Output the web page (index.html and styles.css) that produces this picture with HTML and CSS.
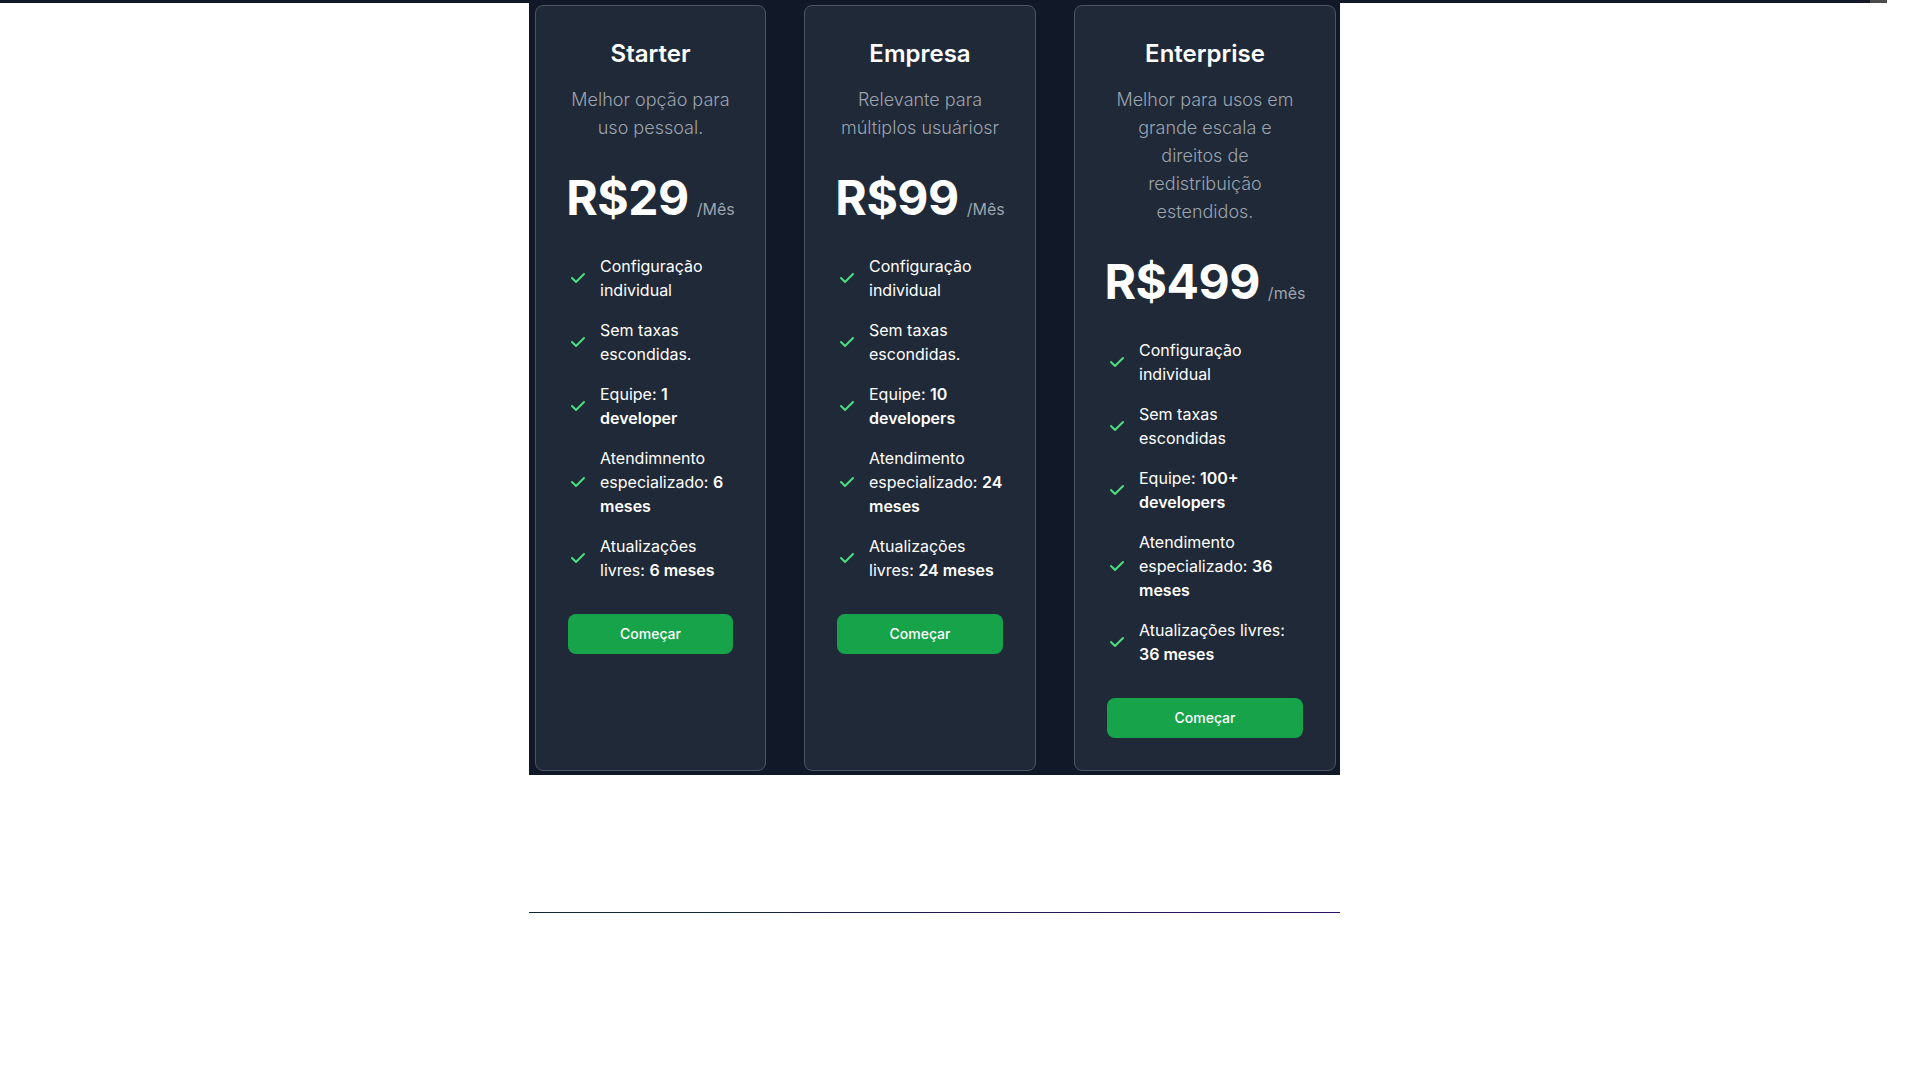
FILE: index.html
```html
<!DOCTYPE html>
<html lang="pt-BR">
<head>
<meta charset="utf-8">
<title>Preços</title>
<link rel="stylesheet" href="styles.css">
</head>
<body>
<div class="topbar"><span class="thumb"></span></div>
<section class="pricing">
  <div class="grid">
    <div class="card">
      <h3 class="title">Starter</h3>
      <p class="desc">Melhor opção para uso pessoal.</p>
      <div class="price"><span class="amount">R$29</span><span class="unit">/Mês</span></div>
      <ul class="features">
        <li><svg class="check" viewBox="0 0 20 20"><path fill-rule="evenodd" d="M16.707 5.293a1 1 0 010 1.414l-8 8a1 1 0 01-1.414 0l-4-4a1 1 0 011.414-1.414L8 12.586l7.293-7.293a1 1 0 011.414 0z"/></svg><span>Configuração individual</span></li>
        <li><svg class="check" viewBox="0 0 20 20"><path fill-rule="evenodd" d="M16.707 5.293a1 1 0 010 1.414l-8 8a1 1 0 01-1.414 0l-4-4a1 1 0 011.414-1.414L8 12.586l7.293-7.293a1 1 0 011.414 0z"/></svg><span>Sem taxas escondidas.</span></li>
        <li><svg class="check" viewBox="0 0 20 20"><path fill-rule="evenodd" d="M16.707 5.293a1 1 0 010 1.414l-8 8a1 1 0 01-1.414 0l-4-4a1 1 0 011.414-1.414L8 12.586l7.293-7.293a1 1 0 011.414 0z"/></svg><span>Equipe: <b>1 developer</b></span></li>
        <li><svg class="check" viewBox="0 0 20 20"><path fill-rule="evenodd" d="M16.707 5.293a1 1 0 010 1.414l-8 8a1 1 0 01-1.414 0l-4-4a1 1 0 011.414-1.414L8 12.586l7.293-7.293a1 1 0 011.414 0z"/></svg><span>Atendimnento especializado: <b>6 meses</b></span></li>
        <li><svg class="check" viewBox="0 0 20 20"><path fill-rule="evenodd" d="M16.707 5.293a1 1 0 010 1.414l-8 8a1 1 0 01-1.414 0l-4-4a1 1 0 011.414-1.414L8 12.586l7.293-7.293a1 1 0 011.414 0z"/></svg><span>Atualizações livres: <b>6 meses</b></span></li>
      </ul>
      <a class="btn" href="#">Começar</a>
    </div>
    <div class="card">
      <h3 class="title">Empresa</h3>
      <p class="desc">Relevante para múltiplos usuáriosr</p>
      <div class="price"><span class="amount">R$99</span><span class="unit">/Mês</span></div>
      <ul class="features">
        <li><svg class="check" viewBox="0 0 20 20"><path fill-rule="evenodd" d="M16.707 5.293a1 1 0 010 1.414l-8 8a1 1 0 01-1.414 0l-4-4a1 1 0 011.414-1.414L8 12.586l7.293-7.293a1 1 0 011.414 0z"/></svg><span>Configuração individual</span></li>
        <li><svg class="check" viewBox="0 0 20 20"><path fill-rule="evenodd" d="M16.707 5.293a1 1 0 010 1.414l-8 8a1 1 0 01-1.414 0l-4-4a1 1 0 011.414-1.414L8 12.586l7.293-7.293a1 1 0 011.414 0z"/></svg><span>Sem taxas escondidas.</span></li>
        <li><svg class="check" viewBox="0 0 20 20"><path fill-rule="evenodd" d="M16.707 5.293a1 1 0 010 1.414l-8 8a1 1 0 01-1.414 0l-4-4a1 1 0 011.414-1.414L8 12.586l7.293-7.293a1 1 0 011.414 0z"/></svg><span>Equipe: <b>10 developers</b></span></li>
        <li><svg class="check" viewBox="0 0 20 20"><path fill-rule="evenodd" d="M16.707 5.293a1 1 0 010 1.414l-8 8a1 1 0 01-1.414 0l-4-4a1 1 0 011.414-1.414L8 12.586l7.293-7.293a1 1 0 011.414 0z"/></svg><span>Atendimento especializado: <b>24 meses</b></span></li>
        <li><svg class="check" viewBox="0 0 20 20"><path fill-rule="evenodd" d="M16.707 5.293a1 1 0 010 1.414l-8 8a1 1 0 01-1.414 0l-4-4a1 1 0 011.414-1.414L8 12.586l7.293-7.293a1 1 0 011.414 0z"/></svg><span>Atualizações livres: <b>24 meses</b></span></li>
      </ul>
      <a class="btn" href="#">Começar</a>
    </div>
    <div class="card">
      <h3 class="title">Enterprise</h3>
      <p class="desc">Melhor para usos em grande escala e direitos de redistribuição estendidos.</p>
      <div class="price"><span class="amount">R$499</span><span class="unit">/mês</span></div>
      <ul class="features">
        <li><svg class="check" viewBox="0 0 20 20"><path fill-rule="evenodd" d="M16.707 5.293a1 1 0 010 1.414l-8 8a1 1 0 01-1.414 0l-4-4a1 1 0 011.414-1.414L8 12.586l7.293-7.293a1 1 0 011.414 0z"/></svg><span>Configuração individual</span></li>
        <li><svg class="check" viewBox="0 0 20 20"><path fill-rule="evenodd" d="M16.707 5.293a1 1 0 010 1.414l-8 8a1 1 0 01-1.414 0l-4-4a1 1 0 011.414-1.414L8 12.586l7.293-7.293a1 1 0 011.414 0z"/></svg><span>Sem taxas escondidas</span></li>
        <li><svg class="check" viewBox="0 0 20 20"><path fill-rule="evenodd" d="M16.707 5.293a1 1 0 010 1.414l-8 8a1 1 0 01-1.414 0l-4-4a1 1 0 011.414-1.414L8 12.586l7.293-7.293a1 1 0 011.414 0z"/></svg><span>Equipe: <b>100+ developers</b></span></li>
        <li><svg class="check" viewBox="0 0 20 20"><path fill-rule="evenodd" d="M16.707 5.293a1 1 0 010 1.414l-8 8a1 1 0 01-1.414 0l-4-4a1 1 0 011.414-1.414L8 12.586l7.293-7.293a1 1 0 011.414 0z"/></svg><span>Atendimento especializado: <b>36 meses</b></span></li>
        <li><svg class="check" viewBox="0 0 20 20"><path fill-rule="evenodd" d="M16.707 5.293a1 1 0 010 1.414l-8 8a1 1 0 01-1.414 0l-4-4a1 1 0 011.414-1.414L8 12.586l7.293-7.293a1 1 0 011.414 0z"/></svg><span>Atualizações livres: <b>36 meses</b></span></li>
      </ul>
      <a class="btn" href="#">Começar</a>
    </div>
  </div>
</section>
<div class="divider"></div>
</body>
</html>
```

FILE: styles.css
```css
* { box-sizing: border-box; }
html, body { margin: 0; padding: 0; background: #ffffff; }
body {
  font-family: Inter, "Noto Sans", "Liberation Sans", sans-serif;
  color: #ffffff;
  -webkit-font-smoothing: antialiased;
}

.topbar {
  width: 1887px;
  height: 3px;
  background: #111827;
  display: flex;
  justify-content: flex-end;
}
.topbar .thumb {
  width: 17px;
  height: 3px;
  background: #4b4b4b;
}

.pricing {
  width: 811px;
  margin-left: 529px;
  height: 772px;
  background: #111827;
  padding: 2px 0 0 6px;
}

.grid {
  display: grid;
  grid-template-columns: 231px 232px 262px;
  column-gap: 38px;
  align-items: stretch;
}

.card {
  display: flex;
  flex-direction: column;
  padding: 32px;
  background: #1f2937;
  border: 1px solid #4b5563;
  border-radius: 8px;
  text-align: center;
}

.title {
  margin: 0 0 16px;
  font-size: 24px;
  line-height: 32px;
  font-weight: 600;
  color: #ffffff;
}

.desc {
  margin: 0;
  font-size: 18px;
  line-height: 28px;
  font-weight: 300;
  color: #9ca3af;
}

.price {
  display: flex;
  justify-content: center;
  align-items: baseline;
  margin: 32px 0;
}
.amount {
  margin-right: 8px;
  font-size: 48px;
  line-height: 1;
  font-weight: 700;
  letter-spacing: -0.5px;
  color: #ffffff;
}
.unit {
  font-size: 16px;
  line-height: 24px;
  color: #9ca3af;
}

.features {
  list-style: none;
  margin: 0 0 32px;
  padding: 0;
  text-align: left;
  display: flex;
  flex-direction: column;
  gap: 16px;
}
.features li {
  display: flex;
  align-items: center;
  gap: 12px;
  font-size: 16px;
  line-height: 24px;
  color: #ffffff;
}
.features b { font-weight: 600; }

.check {
  flex-shrink: 0;
  width: 20px;
  height: 20px;
  fill: #4ade80;
}

.btn {
  display: block;
  height: 40px;
  padding: 10px 20px;
  background: #16a34a;
  border-radius: 8px;
  color: #ffffff;
  font-size: 14px;
  line-height: 20px;
  font-weight: 500;
  text-align: center;
  text-decoration: none;
}

.divider {
  width: 811px;
  height: 1px;
  margin: 137px 0 0 529px;
  background: linear-gradient(90deg, #0b2a30 0%, #1e1b4b 50%, #2e1065 100%);
}
```
